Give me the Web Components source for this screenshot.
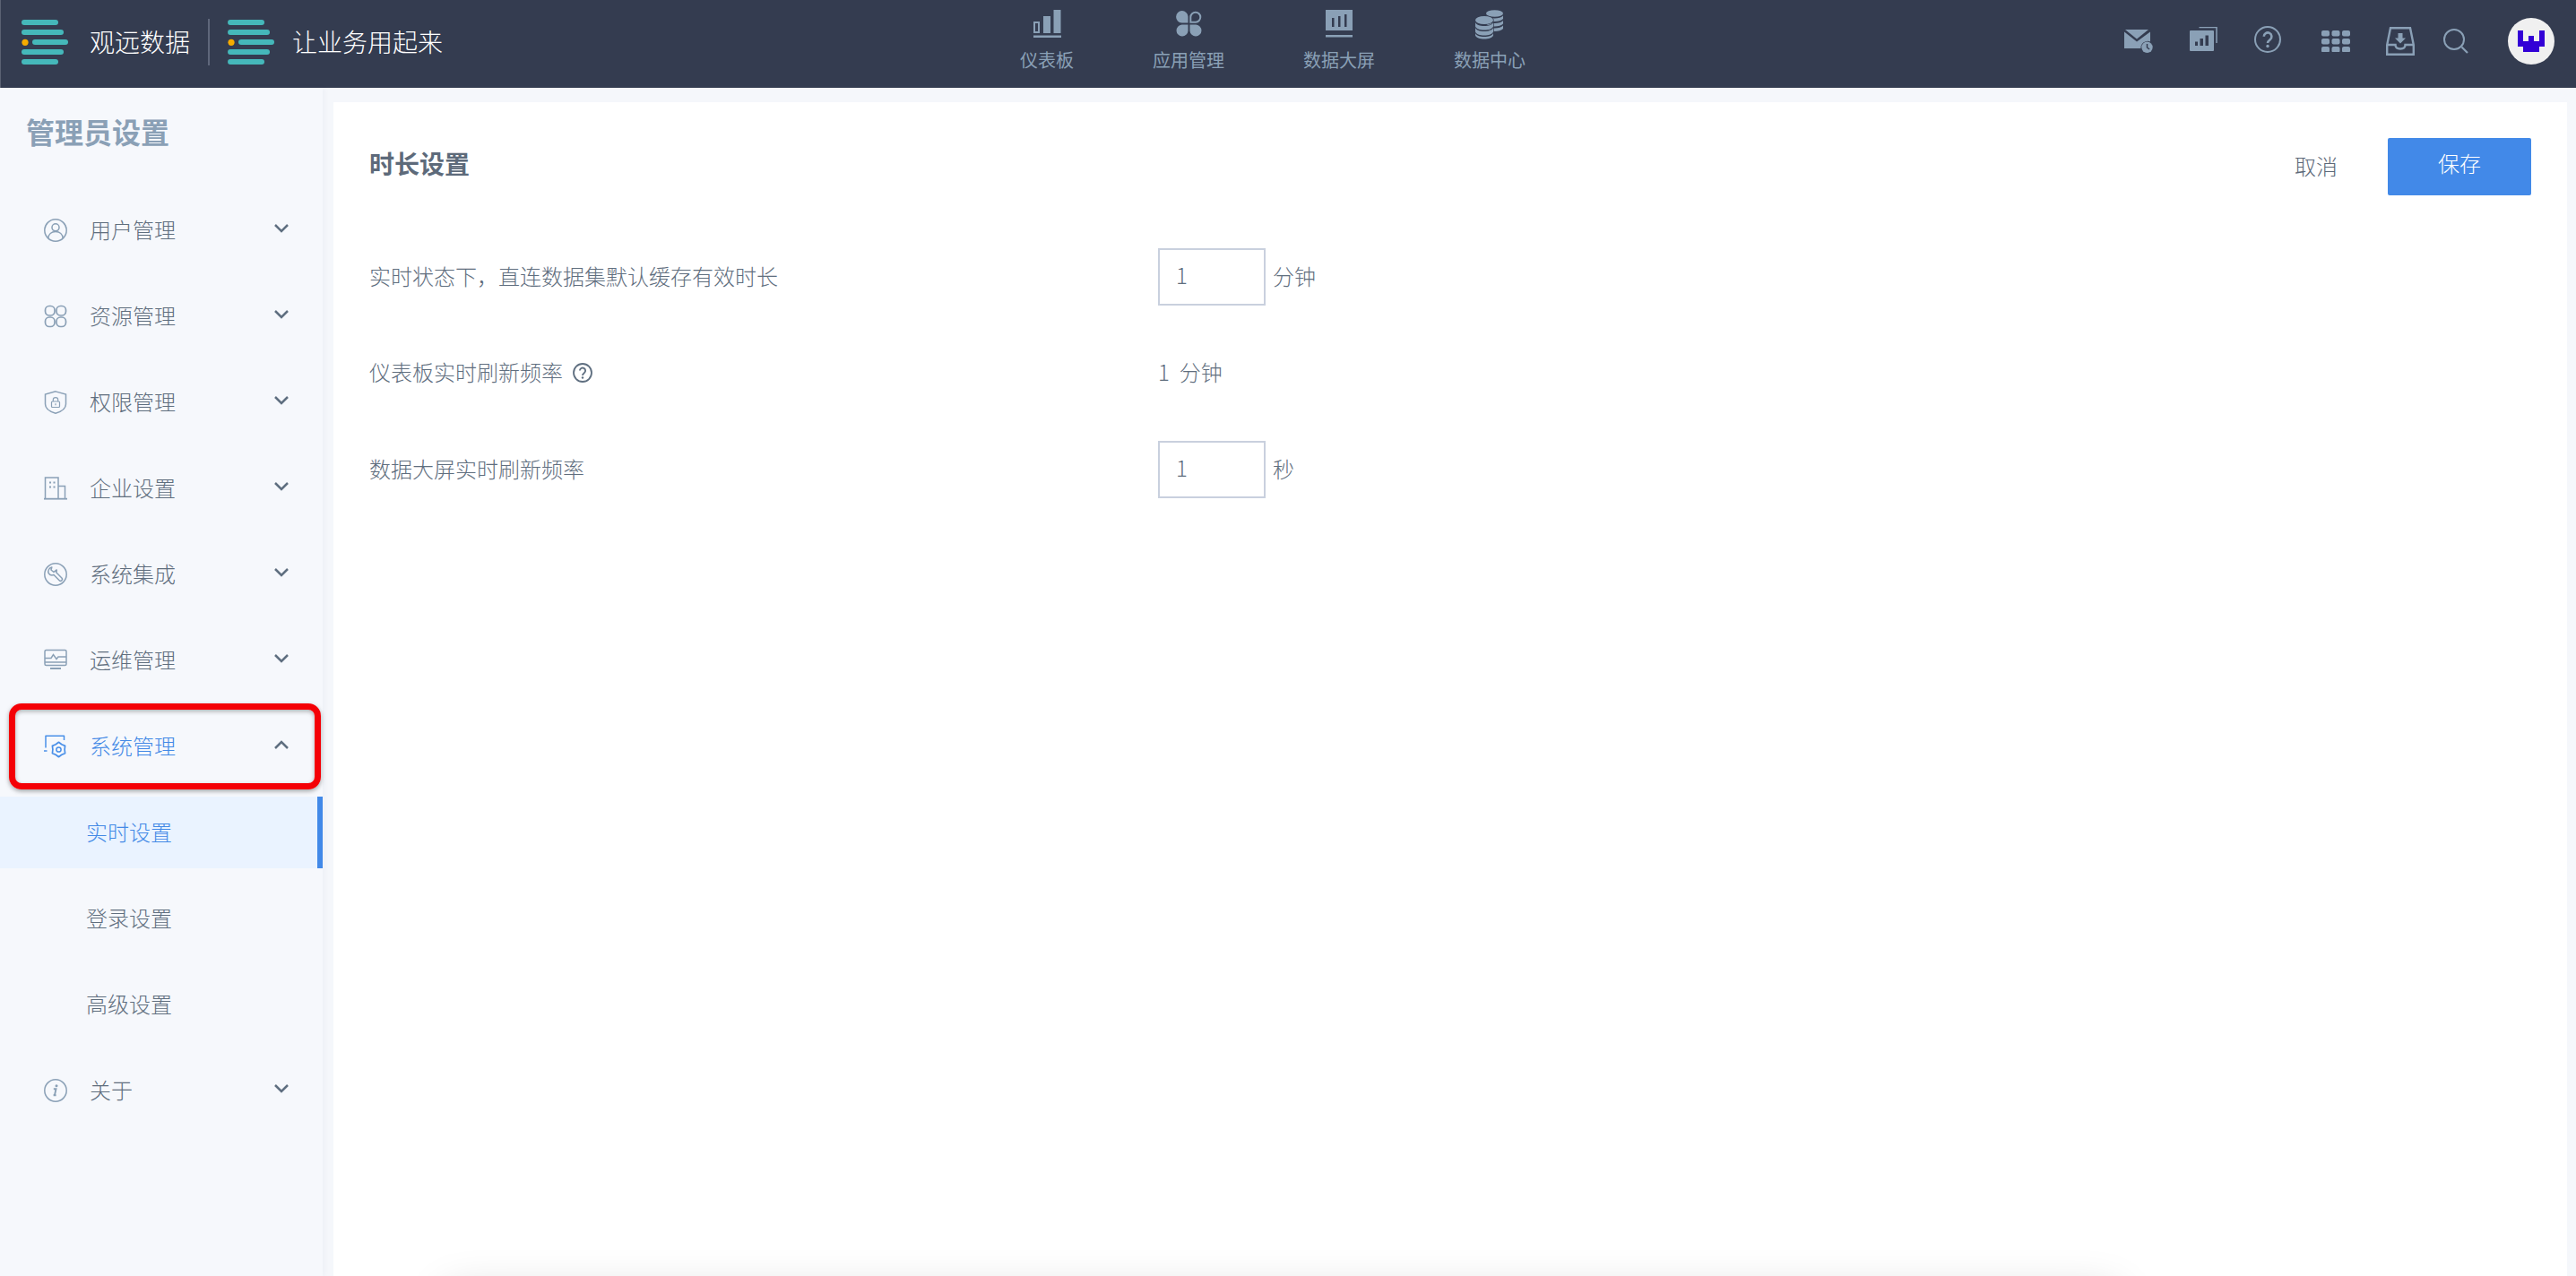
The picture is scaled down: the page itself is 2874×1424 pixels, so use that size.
<!DOCTYPE html>
<html lang="zh">
<head>
<meta charset="utf-8">
<title>管理员设置</title>
<style>
  html, body { margin: 0; height: 100%; overflow: hidden; background: #f5f7fb; }
  body { font-family: "Noto Sans CJK SC", "Liberation Sans", sans-serif; font-weight: 300; }
</style>
</head>
<body>
<app-shell>
  <top-bar slot="top"></top-bar>
  <side-menu slot="side" heading="管理员设置">
    <menu-row icon="user">用户管理</menu-row>
    <menu-row icon="apps">资源管理</menu-row>
    <menu-row icon="shield">权限管理</menu-row>
    <menu-row icon="building">企业设置</menu-row>
    <menu-row icon="wrench">系统集成</menu-row>
    <menu-row icon="monitor">运维管理</menu-row>
    <menu-row icon="gear" open marked>系统管理</menu-row>
    <menu-row sub active>实时设置</menu-row>
    <menu-row sub>登录设置</menu-row>
    <menu-row sub>高级设置</menu-row>
    <menu-row icon="info">关于</menu-row>
  </side-menu>
  <settings-panel slot="main" heading="时长设置">
    <setting-row label="实时状态下，直连数据集默认缓存有效时长" value="1" unit="分钟" editable></setting-row>
    <setting-row label="仪表板实时刷新频率" value="1" unit="分钟" hint></setting-row>
    <setting-row label="数据大屏实时刷新频率" value="1" unit="秒" editable></setting-row>
  </settings-panel>
</app-shell>

<script>
// all icons live here, drawn on their own viewBox
const ICONS = {
  // sidebar, 26x26
  user: `<svg viewBox="0 0 26 26" fill="none" stroke="currentColor" stroke-width="1.500"><circle cx="13" cy="13" r="12.200"/><circle cx="13" cy="9.800" r="4"/><path d="M4.800 22c.3-4.400 3.600-7.400 8.200-7.400s7.900 3 8.200 7.400"/></svg>`,
  apps: `<svg viewBox="0 0 26 26" fill="none" stroke="currentColor" stroke-width="1.700"><rect x="1.500" y="1.500" width="10.500" height="10.500" rx="4.500"/><rect x="14" y="1.500" width="10.500" height="10.500" rx="4.500"/><rect x="1.500" y="14" width="10.500" height="10.500" rx="4.500"/><rect x="14" y="14" width="10.500" height="10.500" rx="4.500"/></svg>`,
  shield: `<svg viewBox="0 0 26 26" fill="none" stroke="currentColor" stroke-width="1.500"><path d="M13 .9 24.500 4V15C24.500 20 19 23.500 13 25.200 7 23.500 1.500 20 1.500 15V4Z"/><rect x="8.500" y="12" width="9" height="6.500" rx="1" stroke-width="1.200"/><path d="M10.300 12V10.300a2.700 2.700 0 0 1 5.400 0V12M13 14.300v2" stroke-width="1.200"/></svg>`,
  building: `<svg viewBox="0 0 26 26" fill="none" stroke="currentColor" stroke-width="1.500"><path d="M1.500 24V1h14.500v23M16 10.500h7.500V24"/><path d="M0 24.700h26" stroke-width="1.800"/><path d="M6 6.500h2M10.500 6.500h2M6 11.500h2M10.500 11.500h2" stroke-width="2.200"/></svg>`,
  wrench: `<svg viewBox="0 0 26 26" fill="none" stroke="currentColor" stroke-width="1.500" stroke-linejoin="round"><circle cx="13" cy="13" r="12.200"/><path d="M8.800 5A5 5 0 0 0 5.200 11.700a5 5 0 0 0 5.800 1.800l6.200 6.200a1.900 1.900 0 0 0 2.700-2.700L13.700 10.800a5 5 0 0 0 .5-2.900L11 10.500 8 8Z"/></svg>`,
  monitor: `<svg viewBox="0 0 26 26" fill="none" stroke="currentColor" stroke-width="1.500"><rect x="1" y="1.500" width="24" height="17" rx="1.500"/><path d="M1 10.500h7l2.500-4 3.500 5 2-2.500h9"/><path d="M1 15h24" stroke-width="1.500"/><path d="M7 22h12" stroke-width="2"/></svg>`,
  gear: `<svg viewBox="0 0 26 26" fill="none" stroke="currentColor" stroke-width="1.500" stroke-linejoin="round"><path d="M2 14.500V1.200h20.500V6"/><path d="M0 18h3.500"/><path d="M23.100 16.500 23.600 20.600 19.800 22.200 16.500 24.700 13.200 22.200 9.400 20.600 9.900 16.500 9.400 12.400 13.200 10.800 16.500 8.300 19.800 10.800 23.600 12.400Z" stroke-width="1.700"/><circle cx="16.500" cy="16.500" r="2.600"/></svg>`,
  info: `<svg viewBox="0 0 26 26" fill="none" stroke="currentColor" stroke-width="1.500"><circle cx="13" cy="13" r="12.200"/><path d="M10.800 11.200h2.700l-1.500 6.800h-1.200M10.600 18.300h3" stroke-width="1.900"/><circle cx="14" cy="7.800" r="1.500" fill="currentColor" stroke="none"/></svg>`,

  // top nav
  bars: `<svg viewBox="0 0 31 32" width="31" height="32" fill="currentColor"><path d="M0 13h7v13H0Zm2 2v9h3v-9Z" fill-rule="evenodd"/><path d="M11 7h8v19h-8ZM22.500 0h8v26h-8ZM0 28.500h31V31H0Z"/></svg>`,
  petals: `<svg viewBox="0 -1 29 30" width="29" height="30" fill="currentColor"><path d="M13.500 13.500H6.500A6.700 6.700 0 1 1 13.500 6.500Z"/><path d="M16.300 12.700V7a5.500 5.500 0 1 1 5.700 5.700Z" fill="none" stroke="currentColor" stroke-width="2"/><path d="M13.500 15.500V22.500A6.500 6.500 0 1 1 6.500 15.500Z"/><path d="M15.500 15.500H22.500A6.500 6.500 0 1 1 15.500 22.500Z"/></svg>`,
  screen: `<svg viewBox="0 0 30 31" width="30" height="31"><path d="M0 0h30v23H0Z" fill="currentColor"/><path d="M7 9h2.500v10H7ZM14 7h2.500v12H14ZM21 5h2.500v14H21Z" fill="#343c50"/><path d="M0 28h30v2.500H0Z" fill="currentColor"/></svg>`,
  coins: `<svg viewBox="0 0 32 33" width="32" height="33" fill="currentColor"><ellipse cx="21.500" cy="4" rx="9.500" ry="3.800"/><path d="M12 6.500c1.500 2 5.500 3 9.500 3s8-1 9.500-3V10c-1.500 2-5.500 3-9.500 3S13.500 12 12 10Z"/><path d="M12 12c1.500 2 5.500 3 9.500 3s8-1 9.500-3v3.500c-1.500 2-5.500 3-9.500 3S13.500 17.500 12 15.500Z"/><path d="M12 17.500c1.500 2 5.500 3 9.500 3s8-1 9.500-3V21c-1.500 2-5.500 3-9.500 3S13.500 23 12 21Z"/><g stroke="#343c50" stroke-width="1.400" paint-order="stroke"><ellipse cx="10" cy="11.500" rx="10" ry="4.500"/><path d="M0 14c1 2.800 5 4 10 4s9-1.200 10-4v4.500c-1 2.800-5 4-10 4s-9-1.200-10-4Z"/><path d="M0 20c1 2.800 5 4 10 4s9-1.200 10-4v4.500c-1 2.800-5 4-10 4s-9-1.200-10-4Z"/><path d="M0 26c1 2.800 5 4 10 4s9-1.200 10-4v2.500c-1 2.800-5 4-10 4s-9-1.200-10-4Z"/></g></svg>`,

  // top right
  mail: `<svg viewBox="0 0 32 26" width="32" height="26" fill="currentColor"><path d="M1 0h26L14 10.500Z"/><path d="M0 2.500 14 13.500 29 2.500V13.500a7.500 7.500 0 0 0-10.500 7.500H0Z"/><circle cx="25.500" cy="19.800" r="6.200"/><path d="M25.500 16v4l2.600 2" fill="none" stroke="#343c50" stroke-width="1.500"/></svg>`,
  stack: `<svg viewBox="0 0 31 27" width="31" height="27" fill="currentColor"><path d="M10.500.5H30V18" fill="none" stroke="currentColor" stroke-width="1.500"/><rect x="0" y="4" width="27" height="23" rx="1"/><path d="M6 16.500h3V21H6ZM11.500 13H15v8h-3.500ZM17.500 9.500H21V21h-3.500Z" fill="#343c50"/></svg>`,
  help: `<svg viewBox="0 0 30 30" width="30" height="30" fill="none" stroke="currentColor" stroke-width="2"><circle cx="15" cy="15" r="14"/><path d="M10.800 11.800a4.300 4.300 0 1 1 6.900 3.400c-1.500 1.200-2.700 1.800-2.700 3.800" stroke-width="2.600"/><circle cx="15" cy="22.500" r="1.700" fill="currentColor" stroke="none"/></svg>`,
  dots: `<svg viewBox="0 0 32 24" width="32" height="24" fill="currentColor"><rect width="9" height="6.500" rx="2"/><rect x="11.500" width="9" height="6.500" rx="2"/><rect x="23" width="9" height="6.500" rx="2"/><rect y="9" width="9" height="6.500" rx="2"/><rect x="11.500" y="9" width="9" height="6.500" rx="2"/><rect x="23" y="9" width="9" height="6.500" rx="2"/><rect y="18" width="9" height="6.500" rx="2"/><rect x="11.500" y="18" width="9" height="6.500" rx="2"/><rect x="23" y="18" width="9" height="6.500" rx="2"/></svg>`,
  inbox: `<svg viewBox="0 0 32 32" width="32" height="32"><path d="M5 1.200H27L30.800 20V30.800H1.200V20Z" fill="none" stroke="currentColor" stroke-width="2.400"/><path d="M2 20H10.500c0 3 2 4.500 5.500 4.500S21.500 23 21.500 20H30" fill="none" stroke="currentColor" stroke-width="2.400"/><path d="M13.500 7h5v5.500h3.500L16 18.500 10 12.500h3.500Z" fill="currentColor"/></svg>`,
  search: `<svg viewBox="0 0 28 28" width="28" height="28" fill="none" stroke="currentColor" stroke-width="2"><circle cx="12" cy="12" r="11"/><path d="M20.500 20.500 27 27" stroke-width="2.200"/></svg>`,
  smallHelp: `<svg viewBox="0 0 22 22" width="22" height="22" fill="none" stroke="currentColor" stroke-width="1.800"><circle cx="11" cy="11" r="10"/><path d="M7.900 8.600a3.100 3.100 0 1 1 5 2.500c-1.100.8-1.900 1.300-1.900 2.800" stroke-width="1.900"/><circle cx="11" cy="16.500" r="1.200" fill="currentColor" stroke="none"/></svg>`,
};

class AppShell extends HTMLElement {
  constructor() {
    super();
    this.attachShadow({ mode: "open" });
  }

  connectedCallback() {
    this.shadowRoot.innerHTML = `
      <style>
        :host { display: flex; flex-direction: column; height: 100vh; overflow: hidden; position: relative; background: #f5f7fb; }
        .body { flex: 1; display: flex; min-height: 0; }
        .sheet {
          position: absolute; left: 500px; width: 1860px; top: 1446px; height: 30px;
          border-radius: 20px; box-shadow: 0 0 46px 10px rgba(0,0,0,.13);
        }
      </style>
      <slot name="top"></slot>
      <div class="body">
        <slot name="side"></slot>
        <slot name="main"></slot>
      </div>
      <div class="sheet"></div>
    `;
  }
}

class GuanLogo extends HTMLElement {
  constructor() {
    super();
    this.attachShadow({ mode: "open" });
  }

  connectedCallback() {
    this.shadowRoot.innerHTML = `
      <style>
        :host { display: flex; align-items: center; gap: ${this.getAttribute("gap")}px; color: #fff; font-size: 28px; line-height: 40px; }
        svg { display: block; }
        span { margin-top: -3px; }
      </style>
      <svg width="52" height="51" viewBox="0 0 52 51" fill="#45b8ba">
        <rect width="41" height="6" rx="3"/>
        <rect y="11" width="47" height="6" rx="3"/>
        <circle cx="4" cy="25.300" r="3.600" fill="#f5ab00"/>
        <rect x="12" y="22" width="40" height="6" rx="3"/>
        <rect y="33" width="47" height="6" rx="3"/>
        <rect y="44" width="41" height="6" rx="3"/>
      </svg>
      <span><slot></slot></span>
    `;
  }
}

class NavItem extends HTMLElement {
  constructor() {
    super();
    this.attachShadow({ mode: "open" });
  }

  connectedCallback() {
    this.shadowRoot.innerHTML = `
      <style>
        :host { display: flex; flex-direction: column; align-items: center; color: #8aa0b6; font-size: 20px; font-weight: 400; line-height: 28px; }
        .pic { height: 42px; margin-top: 11px; display: flex; align-items: flex-start; }
        svg { display: block; }
      </style>
      <div class="pic">${ICONS[this.getAttribute("icon")]}</div>
      <div><slot></slot></div>
    `;
  }
}

class TopBar extends HTMLElement {
  constructor() {
    super();
    this.attachShadow({ mode: "open" });
  }

  connectedCallback() {
    this.shadowRoot.innerHTML = `
      <style>
        :host { display: flex; flex: none; height: 98px; background: #343c50; border-left: 1px solid #5a6172; box-sizing: border-box; align-items: flex-start; }
        .left { width: 1137px; flex: none; display: flex; align-items: center; padding: 21px 0 0 23px; box-sizing: border-box; }
        .sep { width: 2px; height: 52px; background: #5f677b; margin: 0 20px; }
        .nav { display: flex; gap: 88px; }
        .tools { margin-left: auto; color: #8aa0b6; position: relative; height: 98px; width: 504px; flex: none; }
        .tools > * { position: absolute; }
        svg { display: block; }
        .avatar { width: 52px; height: 52px; border-radius: 50%; background: #f0f0f0; display: flex; align-items: center; justify-content: center; }
      </style>
      <div class="left">
        <guan-logo gap="24">观远数据</guan-logo>
        <div class="sep"></div>
        <guan-logo gap="20">让业务用起来</guan-logo>
      </div>
      <div class="nav">
        <nav-item icon="bars">仪表板</nav-item>
        <nav-item icon="petals">应用管理</nav-item>
        <nav-item icon="screen">数据大屏</nav-item>
        <nav-item icon="coins">数据中心</nav-item>
      </div>
      <div class="tools">
        <div style="left:0;top:33px">${ICONS.mail}</div>
        <div style="left:73px;top:30px">${ICONS.stack}</div>
        <div style="left:145px;top:29px">${ICONS.help}</div>
        <div style="left:220px;top:34px">${ICONS.dots}</div>
        <div style="left:292px;top:30px">${ICONS.inbox}</div>
        <div style="left:356px;top:32px">${ICONS.search}</div>
        <div class="avatar" style="left:428px;top:20px">
          <svg width="30" height="24" viewBox="0 0 30 24"><path d="M0 0H6V12H12V6H18V12H24V0H30V18H24V24H6V18H0Z" fill="#3300d6"/></svg>
        </div>
      </div>
    `;
  }
}

class MenuRow extends HTMLElement {
  constructor() {
    super();
    this.attachShadow({ mode: "open" });
  }

  connectedCallback() {
    const isSub = this.hasAttribute("sub");
    const open = this.hasAttribute("open");
    const icon = this.getAttribute("icon");
    const blue = open || this.hasAttribute("active");

    this.shadowRoot.innerHTML = `
      <style>
        :host { display: block; position: relative; font-size: 24px; color: ${blue ? "#4389e6" : "#5f6e7e"}; }
        .row { height: 80px; display: flex; align-items: center; box-sizing: border-box; padding-left: ${isSub ? "96px" : "49px"}; position: relative; }
        :host([active]) .row { background: #eaf3ff; }
        :host([active]) .row::after { content: ""; position: absolute; right: 0; top: 0; bottom: 0; width: 6px; background: #4289e8; }
        .ico { width: 26px; height: 26px; margin-right: 25px; color: ${open ? "#4a90e8" : "#8aa0b6"}; flex: none; }
        .ico svg { display: block; }
        span { margin-top: -3px; }
        .chev { position: absolute; left: 306px; top: 33px; width: 16px; height: 10px; }
        .mark {
          position: absolute; left: 10px; right: 2px; top: -8px; bottom: -8px;
          border: 7px solid #f40006; border-radius: 14px;
          box-shadow: 0 2px 5px rgba(0,0,0,.35), inset 0 2px 5px rgba(0,0,0,.3);
          box-sizing: border-box;
        }
      </style>
      <div class="row">
        ${icon ? `<div class="ico">${ICONS[icon]}</div>` : ""}
        <span><slot></slot></span>
        ${isSub ? "" : `<svg class="chev" viewBox="0 0 16 10" fill="none" stroke="#5f6f80" stroke-width="2.500"><path d="${open ? "M1 9l7-7 7 7" : "M1 1l7 7 7-7"}"/></svg>`}
      </div>
      ${this.hasAttribute("marked") ? '<div class="mark"></div>' : ""}
    `;
  }
}

class SideMenu extends HTMLElement {
  constructor() {
    super();
    this.attachShadow({ mode: "open" });
  }

  connectedCallback() {
    this.shadowRoot.innerHTML = `
      <style>
        :host { display: block; width: 360px; flex: none; background: #f6f8fc; box-shadow: 2px 0 6px rgba(30,50,90,.04); }
        h2 { margin: 0; padding: 0 0 0 29px; height: 97px; line-height: 97px; font-size: 32px; font-weight: 700; color: #8aa0b6; }
        .list { display: flex; flex-direction: column; gap: 16px; padding-top: 22px; }
      </style>
      <h2>${this.getAttribute("heading")}</h2>
      <div class="list"><slot></slot></div>
    `;
  }
}

class SettingRow extends HTMLElement {
  constructor() {
    super();
    this.attachShadow({ mode: "open" });
  }

  connectedCallback() {
    const value = this.getAttribute("value");
    const unit = this.getAttribute("unit");
    const control = this.hasAttribute("editable")
      ? `<div class="box"><span class="num">${value}</span></div><span class="unit">${unit}</span>`
      : `<span class="up">${value}</span><span class="plain up">${unit}</span>`;

    this.shadowRoot.innerHTML = `
      <style>
        :host { display: grid; grid-template-columns: 880px auto; height: 64px; align-items: center; font-size: 24px; color: #5f6e7e; }
        :host([hint]) { margin-bottom: 1px; }
        .label, .ctl { display: flex; align-items: center; }
        .label > span:first-child, .unit, .up { margin-top: -4px; }
        .hint { margin-left: 11px; color: #5f6f80; }
        .hint svg { display: block; }
        .box { width: 120px; height: 64px; box-sizing: border-box; border: 2px solid #c9d0de; padding-left: 18px; line-height: 56px; }
        .unit { margin-left: 8px; }
        .plain { margin-left: 11px; }
      </style>
      <div class="label"><span>${this.getAttribute("label")}</span>${this.hasAttribute("hint") ? `<span class="hint">${ICONS.smallHelp}</span>` : ""}</div>
      <div class="ctl">${control}</div>
    `;
  }
}

class SettingsPanel extends HTMLElement {
  constructor() {
    super();
    this.attachShadow({ mode: "open" });
  }

  connectedCallback() {
    this.shadowRoot.innerHTML = `
      <style>
        :host { display: block; flex: 1; min-width: 0; background: #fff; margin: 16px 10px 0 12px; padding: 40px 40px 0; box-sizing: border-box; }
        .head { display: flex; align-items: center; height: 64px; }
        h3 { margin: 0; font-size: 28px; font-weight: 700; color: #5d6a7a; flex: 1; line-height: 56px; align-self: flex-start; }
        .cancel { font-size: 24px; color: #5c6878; margin-right: 56px; margin-top: -4px; }
        .save { width: 160px; height: 64px; background: #4289e8; color: #fff; border-radius: 2px; font-size: 24px; line-height: 56px; text-align: center; }
        .rows { margin-top: 59px; display: flex; flex-direction: column; gap: 43px; }
      </style>
      <div class="head">
        <h3>${this.getAttribute("heading")}</h3>
        <span class="cancel">取消</span>
        <div class="save">保存</div>
      </div>
      <div class="rows"><slot></slot></div>
    `;
  }
}

customElements.define("app-shell", AppShell);
customElements.define("guan-logo", GuanLogo);
customElements.define("nav-item", NavItem);
customElements.define("top-bar", TopBar);
customElements.define("menu-row", MenuRow);
customElements.define("side-menu", SideMenu);
customElements.define("setting-row", SettingRow);
customElements.define("settings-panel", SettingsPanel);
</script>
</body>
</html>
